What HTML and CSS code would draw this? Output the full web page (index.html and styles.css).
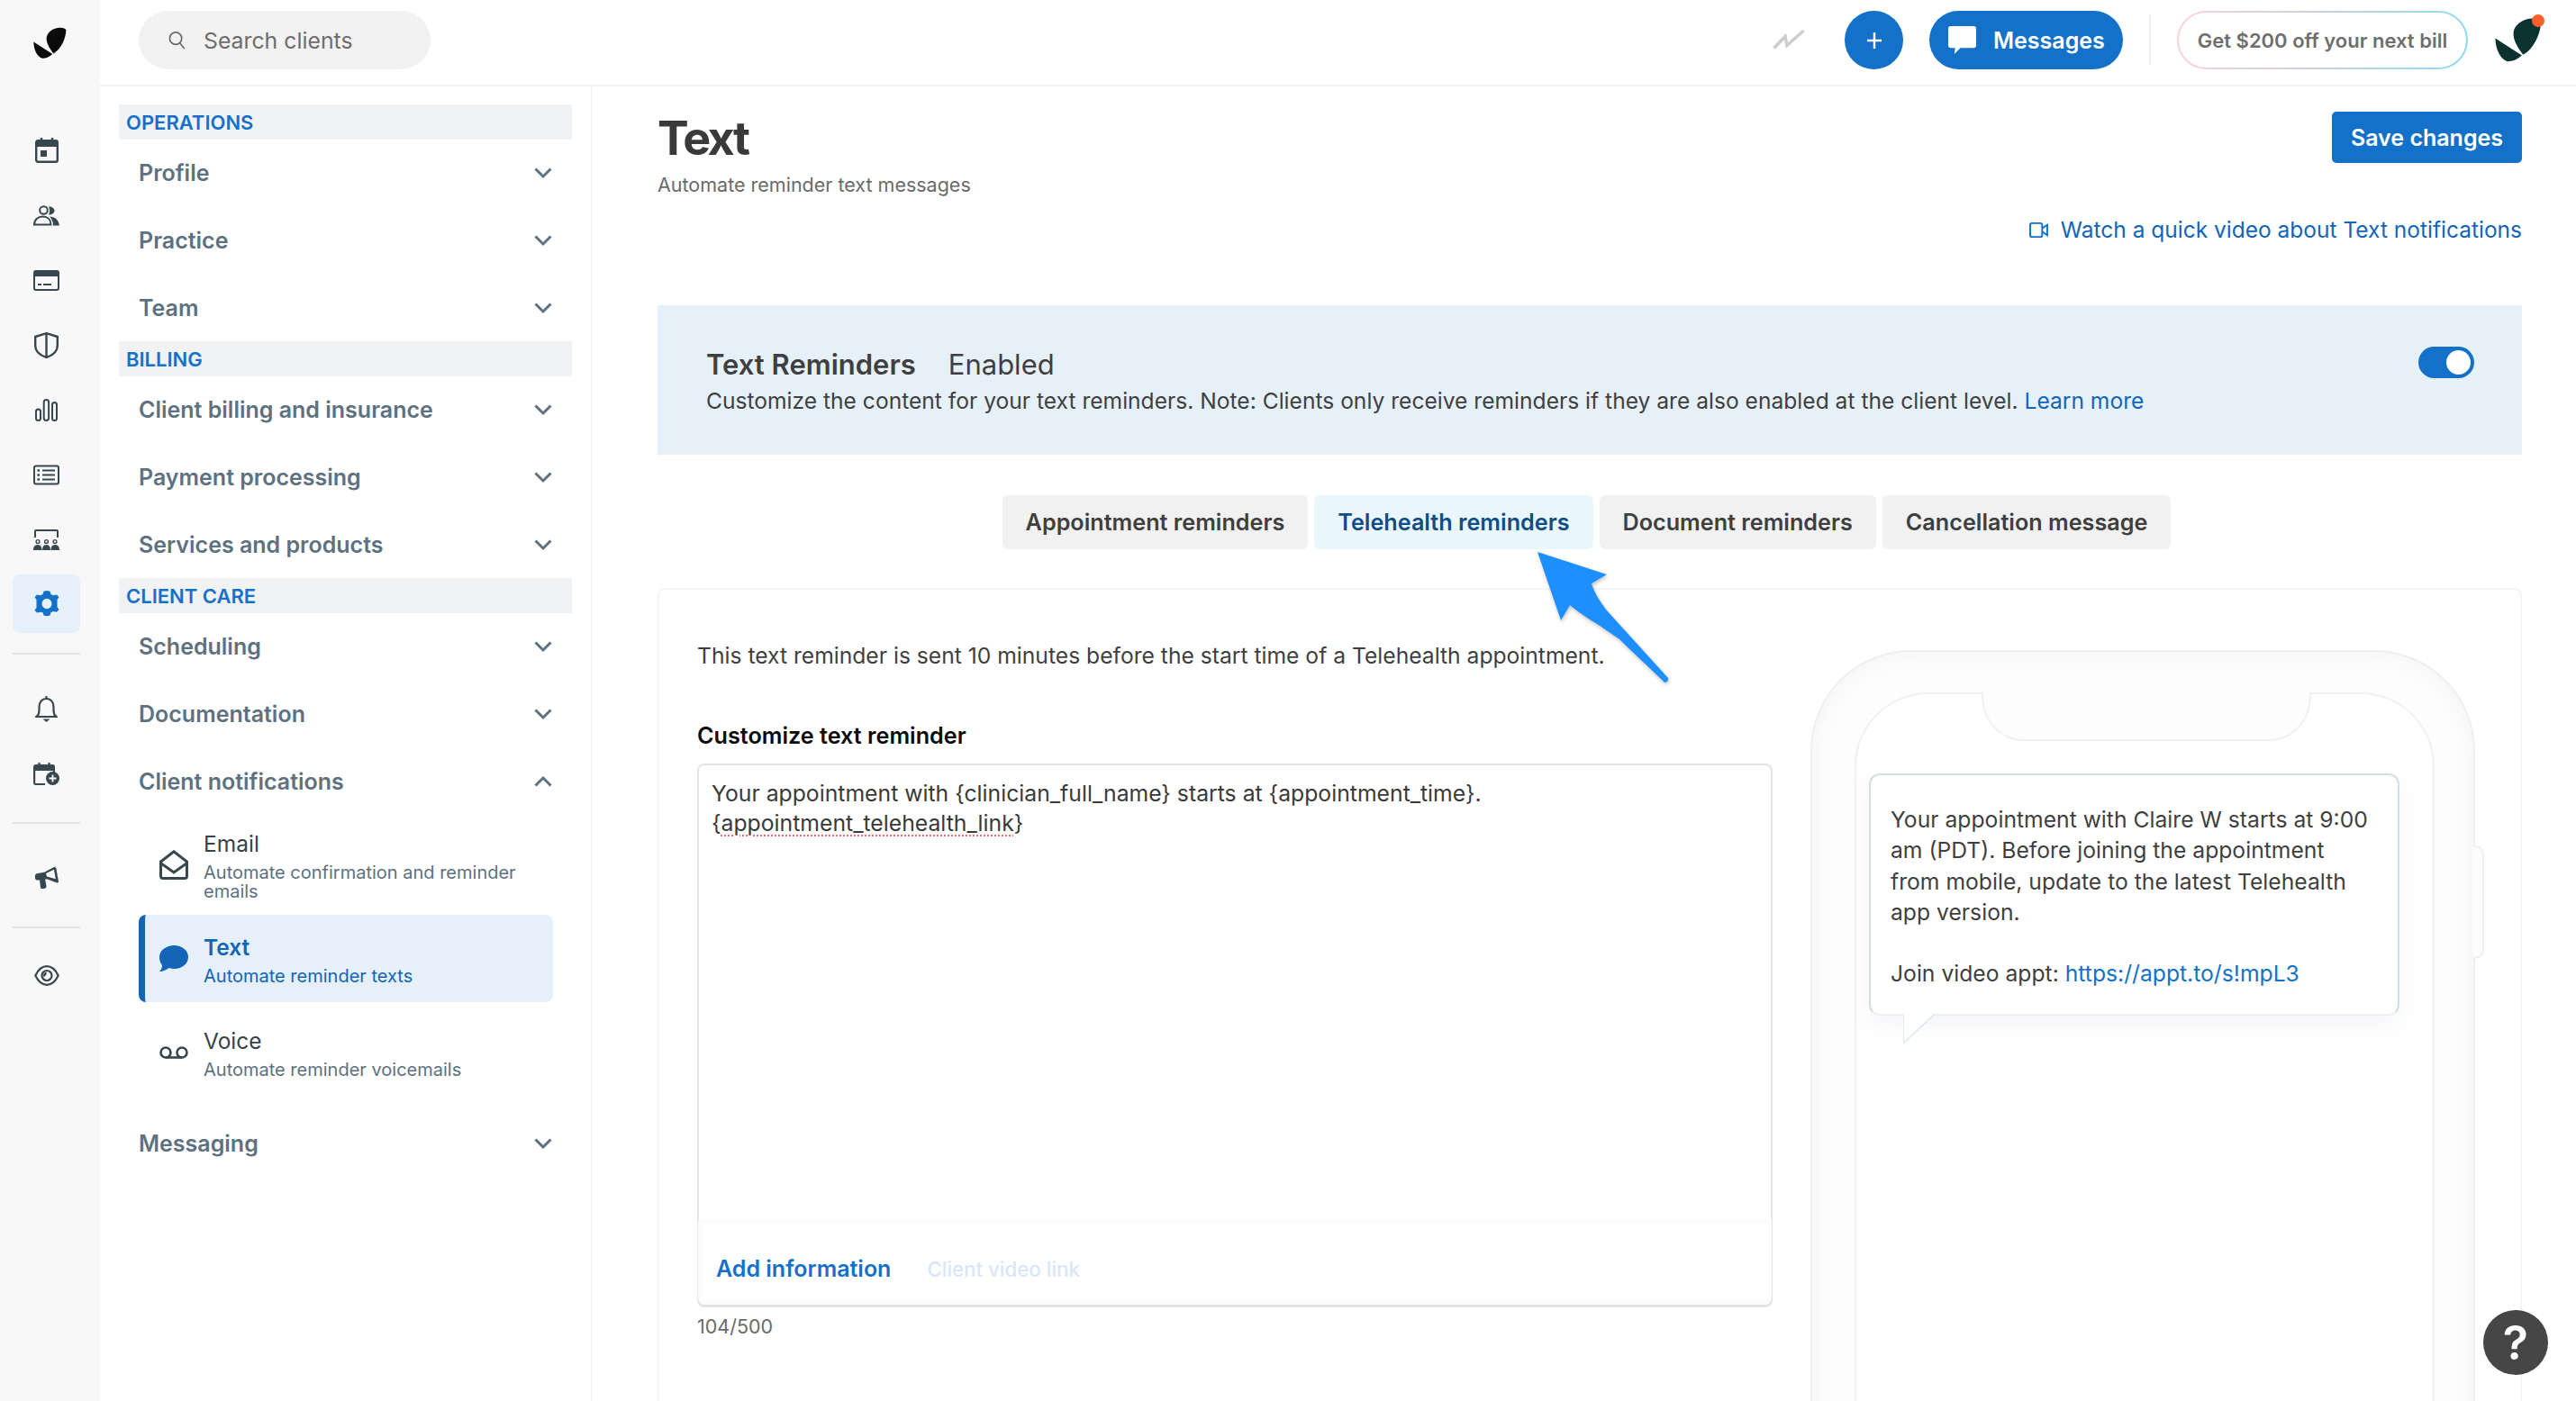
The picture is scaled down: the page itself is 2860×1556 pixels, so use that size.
FILE: index.html
```html
<!DOCTYPE html>
<html lang="en">
<head>
<meta charset="utf-8">
<title>Text notifications</title>
<link rel="stylesheet" href="styles.css">
</head>
<body>
<svg class="defs" width="0" height="0" aria-hidden="true">
  <symbol id="chev" viewBox="0 0 20 14"><path d="M1.500 2.500 10 11l8.500-8.500" fill="none" stroke="currentColor" stroke-width="3"/></symbol>
  <symbol id="logo" viewBox="0 0 37 35"><path d="M36.300 3C36.500 7 35 13 32.500 18 30 23 26.500 27 22.300 29.500 19 25 15.500 20 14.800 15 14.300 11 15 8 19 4.500 24 .5 33-.5 36.300 3Z"/><path d="M.3 16.500 21.300 30C18 33 14 35 9.700 34.700 4 33 .5 25 .3 16.500Z"/></symbol>
</svg>
<div class="app">
  <nav class="rail">
    <div class="rail-logo"><svg class="logo-mark"><use href="#logo"/></svg></div>
    <div class="rail-group">
      <a class="rail-item"><svg viewBox="0 0 26 28" class="ri ri-cal"><path d="M7 0v4M19 0v4" stroke-width="2.400"/><rect x="1.200" y="3.200" width="23.600" height="23.600" rx="2" stroke-width="2.400"/><path d="M1 3h24v7H1z" fill="currentColor" stroke="none"/><rect x="6" y="14" width="7" height="7" fill="currentColor" stroke="none"/></svg></a>
      <a class="rail-item"><svg viewBox="0 0 29 22" class="ri ri-wide"><circle cx="11.500" cy="5" r="4.300" stroke-width="2"/><path d="M17 1c4 0 6.500 2 6.500 4.500S21 10 17 10c1.500-3 1.500-6 0-9Z" fill="currentColor" stroke="none"/><path d="M1 21c0-5.500 4-9 9.500-9s9 3.500 9 9Z" stroke-width="2"/><path d="M18 12c6 0 10 3.500 11 10h-7c0-4-1.500-7.500-4-10Z" fill="currentColor" stroke="none"/></svg></a>
      <a class="rail-item"><svg viewBox="0 0 29 23" class="ri ri-wide"><rect x="1" y="1" width="27" height="21" rx="2" stroke-width="2"/><path d="M1 1h27v6H1z" fill="currentColor" stroke="none"/><path d="M5 16h4M11 16h9" stroke-width="2"/></svg></a>
      <a class="rail-item"><svg viewBox="0 0 27 29" class="ri ri-shield"><path d="M13.500 1.200 25.800 5v10c0 6.500-5 10.500-12.300 13C6.200 25.500 1.200 21.500 1.200 15V5Z" stroke-width="2.400"/><path d="M13.500 2v26" stroke-width="2.400"/></svg></a>
      <a class="rail-item"><svg viewBox="0 0 25 25" class="ri ri-bars"><rect x="1" y="11.500" width="5" height="12.500" rx="2.500" stroke-width="2"/><rect x="9.700" y="1" width="5.400" height="23" rx="2.700" stroke-width="2"/><rect x="19" y="4" width="5" height="20" rx="2.500" stroke-width="2"/></svg></a>
      <a class="rail-item"><svg viewBox="0 0 29 22" class="ri ri-wide"><rect x="1" y="1" width="27" height="20" rx="2" stroke-width="2"/><path d="M10 6h14M10 11h14M10 16h14" stroke-width="2"/><path d="M4.500 6h2.500M4.500 11h2.500M4.500 16h2.500" stroke-width="2.400"/></svg></a>
      <a class="rail-item"><svg viewBox="0 0 29 23" class="ri ri-wide"><path d="M2 9V2a1 1 0 0 1 1-1h23a1 1 0 0 1 1 1v7" stroke-width="2"/><circle cx="5" cy="13.500" r="1.900" stroke-width="1.400"/><circle cx="14.500" cy="13.500" r="1.900" stroke-width="1.400"/><circle cx="24" cy="13.500" r="1.900" stroke-width="1.400"/><path d="M0 23c0-4 2-6 5-6s4.500 2 4.500 6ZM10 23c0-4 1.500-6 4.500-6s4.500 2 4.500 6ZM19.500 23c0-4 1.500-6 4.500-6s5 2 5 6Z" fill="currentColor" stroke="none"/></svg></a>
      <a class="rail-item is-active"><svg viewBox="0 0 28 36" class="ri ri-gear" preserveAspectRatio="none"><path fill-rule="evenodd" d="M14 0l3.500 1 1 4 2.500 1.500 4-1 2.500 3.500-2 3.500v10l2 3.500-2.500 3.500-4-1-2.500 1.500-1 4-3.500 1-3.500-1-1-4L7 29.500l-4 1L.5 27l2-3.500v-11l-2-3.500L3 5.500l4 1L9.500 5l1-4z M14 11a5.500 7 0 1 0 0 14 5.500 7 0 0 0 0-14Z"/></svg></a>
    </div>
    <hr class="rail-rule rule-a">
    <div class="rail-group rail-group-b">
      <a class="rail-item"><svg viewBox="0 0 25 29" class="ri ri-bell"><path d="M12.500 0v3" stroke-width="2"/><path d="M1.500 23c2-1.500 3-3.500 3-7v-4c0-5 3-9 8-9s8 4 8 9v4c0 3.500 1 5.500 3 7Z" stroke-width="2.200"/><path d="M8.500 25.500h8L12.500 29Z" fill="currentColor" stroke="none"/></svg></a>
      <a class="rail-item"><svg viewBox="0 0 29 25" class="ri ri-calp"><path d="M6.500 0v4M17.500 0v4" stroke-width="2.200"/><path d="M13 24H2.800a1.700 1.700 0 0 1-1.700-1.700V4.700A1.700 1.700 0 0 1 2.800 3h18.400a1.700 1.700 0 0 1 1.700 1.700V12" stroke-width="2.200"/><path d="M1 3h22v6H1z" fill="currentColor" stroke="none"/><circle cx="21.500" cy="17.500" r="7.500" fill="currentColor" stroke="none"/><path d="M21.500 13.500v8M17.500 17.500h8" stroke="#fff" stroke-width="1.800"/></svg></a>
    </div>
    <hr class="rail-rule rule-b">
    <a class="rail-item rail-mega"><svg viewBox="0 0 30 32" class="ri ri-mega" preserveAspectRatio="none"><path d="M1 13c0-2 1-3 3-3.500L12 8 24 1l2 1 3 19-2 1-12-5-2 .5 1.500 9c.2 2-1 3-3 3h-2c-1 0-1.500-.5-2-1.500L6.500 18.500 4 18.500C2 18.500 1 17 1 15Z" fill="currentColor" stroke="none"/><path d="M14 9.500 23.500 4.500 25.500 17 15 13.500Z" fill="#f8f8f8" stroke="none"/></svg></a>
    <hr class="rail-rule rule-c">
    <a class="rail-item rail-eye"><svg viewBox="0 0 28 23" class="ri ri-eye"><path d="M1.300 11.500C4.500 5 9 1.200 14 1.200s9.500 3.800 12.700 10.300C23.500 18 19 21.800 14 21.800S4.500 18 1.300 11.500Z" stroke-width="2.200"/><circle cx="14" cy="11.500" r="5.500" stroke-width="2.200"/><path d="M14 7.500a4 4 0 0 0-3.700 5.500C12.500 12.500 14 10 14 7.500Z" fill="currentColor" stroke="none"/></svg></a>
  </nav>

  <div class="shell">
    <header class="topbar">
      <div class="search">
        <svg class="search-icon" viewBox="0 0 20 22"><circle cx="8.500" cy="8.500" r="7" /><path d="M13.500 14l5 6.500"/></svg>
        <span>Search clients</span>
      </div>
      <div class="top-actions">
        <svg class="spark" viewBox="0 0 36 24"><path d="M1.500 21.500 14 8.500l2 10L34.500 2" /></svg>
        <button class="btn-plus" type="button"><svg viewBox="0 0 18 20"><path d="M9 1v18M1 10h16"/></svg></button>
        <button class="btn-messages" type="button"><svg viewBox="0 0 32 32"><path d="M3 0h26a3 3 0 0 1 3 3v19a3 3 0 0 1-3 3H14l-7 7 1-7H3a3 3 0 0 1-3-3V3a3 3 0 0 1 3-3Z"/></svg>Messages</button>
        <span class="top-sep"></span>
        <a class="promo">Get $200 off your next bill</a>
        <span class="avatar"><svg class="avatar-mark"><use href="#logo"/></svg><i class="avatar-dot"></i></span>
      </div>
    </header>

    <div class="body">
      <aside class="sidebar">
        <div class="sec">OPERATIONS</div>
        <a class="item">Profile<svg class="chev"><use href="#chev"/></svg></a>
        <a class="item">Practice<svg class="chev"><use href="#chev"/></svg></a>
        <a class="item">Team<svg class="chev"><use href="#chev"/></svg></a>
        <div class="sec">BILLING</div>
        <a class="item">Client billing and insurance<svg class="chev"><use href="#chev"/></svg></a>
        <a class="item">Payment processing<svg class="chev"><use href="#chev"/></svg></a>
        <a class="item">Services and products<svg class="chev"><use href="#chev"/></svg></a>
        <div class="sec">CLIENT CARE</div>
        <a class="item">Scheduling<svg class="chev"><use href="#chev"/></svg></a>
        <a class="item">Documentation<svg class="chev"><use href="#chev"/></svg></a>
        <a class="item">Client notifications<svg class="chev chev-up"><use href="#chev"/></svg></a>
        <a class="sub sub-email">
          <svg class="sub-icon" viewBox="0 0 32 33"><path d="M1.500 13 16 1.800 30.500 13v16a2.500 2.500 0 0 1-2.500 2.500H4A2.500 2.500 0 0 1 1.500 29Z"/><path d="M2 15l14 10 14-10"/></svg>
          <span class="sub-text"><b>Email</b><small>Automate confirmation and reminder emails</small></span>
        </a>
        <a class="sub sub-active">
          <svg class="sub-icon sub-icon-fill" viewBox="0 0 32 29"><path d="M16.500 0C25 0 32 5.500 32 13s-7 13-15.500 13c-2 0-4-.3-6-1C8 27 4 29 0 29c2-2 3-4.500 3-7C1 19.500 0 16.500 0 13 0 5.500 7.500 0 16.500 0Z"/></svg>
          <span class="sub-text"><b>Text</b><small>Automate reminder texts</small></span>
        </a>
        <a class="sub sub-voice">
          <svg class="sub-icon sub-icon-voice" viewBox="0 0 32 14"><circle cx="7" cy="7" r="5.500"/><circle cx="25" cy="7" r="5.500"/><path d="M7 12.500h18"/></svg>
          <span class="sub-text"><b>Voice</b><small>Automate reminder voicemails</small></span>
        </a>
        <a class="item item-msg">Messaging<svg class="chev"><use href="#chev"/></svg></a>
      </aside>

      <main class="main">
        <div class="page-head">
          <div>
            <h1>Text</h1>
            <p class="subtitle">Automate reminder text messages</p>
          </div>
          <button class="btn-save" type="button">Save changes</button>
        </div>
        <a class="video-link"><svg viewBox="0 0 22 20"><rect x="1" y="2" width="14" height="16" rx="2"/><path d="M15 8l6-4v12l-6-4"/></svg>Watch a quick video about Text notifications</a>

        <section class="banner">
          <div class="banner-text">
            <div class="banner-head"><strong>Text Reminders</strong><span>Enabled</span></div>
            <p>Customize the content for your text reminders. Note: Clients only receive reminders if they are also enabled at the client level. <a>Learn more</a></p>
          </div>
          <span class="toggle"><i></i></span>
        </section>

        <div class="tabs">
          <a class="tab">Appointment reminders</a>
          <a class="tab tab-on">Telehealth reminders</a>
          <a class="tab">Document reminders</a>
          <a class="tab">Cancellation message</a>
        </div>

        <section class="card">
          <div class="form">
            <p class="intro">This text reminder is sent 10 minutes before the start time of a Telehealth appointment.</p>
            <label class="label">Customize text reminder</label>
            <div class="editor">
              <div class="editor-text">Your appointment with {clinician_full_name} starts at {appointment_time}.<br>{<span class="spell">appointment_telehealth_link</span>}</div>
              <div class="editor-foot"><a class="add-info">Add information</a><span class="token">Client video link</span></div>
            </div>
            <div class="count">104/500</div>
          </div>
          <div class="phone">
            <i class="phone-btn"></i>
            <div class="screen">
              <i class="notch"></i>
              <div class="bubble">
                Your appointment with Claire W starts at 9:00<br>am (PDT). Before joining the appointment<br>from mobile, update to the latest Telehealth<br>app version.<br><br>Join video appt: <a>https://appt.to/s!mpL3</a>
                <svg class="bubble-tail" viewBox="0 0 36 33"><path d="M0 0v31l1 1L35 0"/></svg>
              </div>
            </div>
          </div>
        </section>
      </main>
    </div>
  </div>
</div>
<svg class="arrow" viewBox="0 0 160 160"><path d="M4 3 81 28 64 38C66 46 72 56 80 67L149 143Q150 147 145 148C125 128 110 115 95 100 75 85 55 75 40 62L30 79Z"/></svg>
<a class="help">?</a>
</body>
</html>
```
FILE: styles.css
```css
* { box-sizing: border-box; }
html, body { margin: 0; height: 100%; }
body { width: 2860px; height: 1556px; overflow: hidden; position: relative; background: #fff; font-family: Inter, "Liberation Sans", sans-serif; color: #3f3f3f; }
a { color: inherit; text-decoration: none; }
button { font-family: inherit; border: 0; cursor: pointer; }
.defs { position: absolute; }
.app { display: flex; height: 1556px; }

.rail { width: 111px; flex: none; background: #f8f8f8; color: #37474f; display: flex; flex-direction: column; align-items: flex-start; padding-left: 14px; }
.rail-logo { height: 95px; width: 75px; padding: 30px 0 0 23px; }
.logo-mark { width: 37px; height: 35px; fill: #0b0b0b; display: block; }
.rail-group { display: flex; flex-direction: column; margin-top: 36px; }
.rail-group-b { margin-top: 24px; }
.rail-item { width: 75px; height: 72px; display: flex; align-items: center; justify-content: center; border-radius: 8px; }
.ri { display: block; fill: none; stroke: currentColor; }
.ri-cal { width: 26px; height: 28px; }
.ri-wide { width: 29px; height: 23px; }
.ri-shield { width: 27px; height: 29px; }
.ri-bars { width: 25px; height: 25px; }
.ri-gear { width: 28px; height: 29px; fill: currentColor; stroke: none; }
.ri-bell { width: 25px; height: 29px; }
.ri-calp { width: 29px; height: 25px; }
.ri-mega { width: 28px; height: 27px; }
.ri-eye { width: 28px; height: 23px; }
.is-active { background: #e6f0fa; color: #1471c9; height: 65px; margin-top: 3px; }
.rail-rule { width: 75px; height: 2px; margin: 0; border: 0; background: #e2e2e2; }
.rule-a { margin-top: 22px; }
.rule-b { margin-top: 18px; }
.rule-c { margin-top: 18px; }
.rail-mega { margin-top: 24px; }
.rail-eye { margin-top: 16px; }

.shell { flex: 1; min-width: 0; display: flex; flex-direction: column; }
.topbar { height: 96px; flex: none; display: flex; justify-content: space-between; align-items: flex-start; border-bottom: 2px solid #f3f3f3; padding: 12px 38px 0 43px; }
.search { width: 324px; height: 65px; border-radius: 33px; background: #f2f2f2; display: flex; align-items: center; padding-left: 33px; font-size: 24.800px; color: #6d6d6d; }
.search-icon { width: 19px; height: 22px; fill: none; stroke: #6d6d6d; stroke-width: 1.800; margin-right: 20px; }
.top-actions { display: flex; align-items: flex-start; }
.spark { width: 36px; height: 24px; margin: 20px 44px 0 0; fill: none; stroke: #cdcdcd; stroke-width: 3.500; }
.btn-plus { width: 65px; height: 65px; border-radius: 50%; background: #1471c9; padding: 0; display: flex; align-items: center; justify-content: center; margin-right: 29px; }
.btn-plus svg { width: 18px; height: 20px; stroke: #fff; stroke-width: 2.400; fill: none; }
.btn-messages { width: 215px; height: 65px; border-radius: 33px; background: #1471c9; color: #fff; font-size: 25px; font-weight: 600; display: flex; align-items: center; padding: 0 0 0 21px; margin-right: 29px; }
.btn-messages svg { width: 31px; height: 31px; fill: #fff; margin-right: 19px; }
.top-sep { width: 2px; height: 56px; background: #efefef; margin: 4px 29px 0 0; }
.promo { width: 323px; height: 65px; border-radius: 33px; display: flex; align-items: center; justify-content: center; font-size: 22px; font-weight: 600; color: #6e6e6e; border: 2px solid transparent; background: linear-gradient(#fff, #fff) padding-box, linear-gradient(90deg, #fbd3d3, #c9cfe3 50%, #8cdcf2) border-box; }
.avatar { position: relative; width: 52px; height: 52px; margin: 4px 0 0 30px; display: block; }
.avatar-mark { width: 52px; height: 52px; margin-top: 2px; fill: #0a3330; display: block; }
.avatar-dot { position: absolute; left: 41px; top: 0; width: 14px; height: 14px; border-radius: 50%; background: #ff5f2d; }

.body { flex: 1; min-height: 0; display: flex; }
.sidebar { width: 547px; flex: none; padding: 20px 21px 0 21px; border-right: 2px solid #f5f5f5; }
.sec { height: 39px; background: #f1f2f4; color: #1471c9; font-size: 22px; font-weight: 600; padding-left: 8px; line-height: 40px; }
.item { height: 74.670px; display: flex; align-items: center; justify-content: space-between; padding: 0 0 0 22px; font-size: 25px; font-weight: 600; color: #5d7180; }
.chev { width: 20px; height: 14px; color: #5d7180; margin-right: 22px; }
.chev-up { transform: rotate(180deg); }
.sub { display: flex; align-items: center; margin-left: 22px; width: 460px; padding-left: 23px; border-radius: 8px; }
.sub-email { height: 111px; }
.sub-active { height: 97px; background: #e6f0fa; border-left: 7px solid #1265b7; padding-left: 16px; color: #1265b7; }
.sub-voice { height: 112px; }
.sub-icon { width: 32px; height: 33px; flex: none; fill: none; stroke: #37474f; stroke-width: 3; margin-right: 17px; }
.sub-icon-fill { fill: #1265b7; stroke: none; height: 29px; }
.sub-icon-voice { height: 14px; stroke-width: 2.600; }
.sub-text { display: flex; flex-direction: column; min-width: 0; }
.sub-email .sub-text { margin-top: 2px; }
.sub-active .sub-text { margin-top: 3px; }
.sub-voice .sub-text { margin-top: 3px; }
.sub-text b { font-size: 24.500px; font-weight: 400; line-height: 30px; color: #37424a; }
.sub-text small { font-size: 20px; line-height: 21px; color: #5d7180; margin-top: 7px; }
.sub-active b { font-weight: 600; color: #1265b7; }
.sub-active small { color: #1265b7; }
.item-msg { margin-top: 8px; }

.main { flex: 1; min-width: 0; padding: 28px 60px 0 72px; }
.page-head { height: 101px; display: flex; justify-content: space-between; align-items: flex-start; }
h1 { margin: 0; font-size: 52px; font-weight: 700; letter-spacing: -2.500px; line-height: 59px; color: #3a3a3a; }
.subtitle { margin: 9px 0 0; font-size: 21.500px; line-height: 26px; color: #6a6a6a; }
.btn-save { width: 211px; height: 57px; background: #1471c9; color: #fff; font-size: 25px; font-weight: 600; border-radius: 5px; }
.video-link { display: flex; justify-content: flex-end; align-items: center; height: 30px; margin-top: 15px; font-size: 24.500px; color: #1265b7; }
.video-link svg { width: 21px; height: 19px; fill: none; stroke: #1471c9; stroke-width: 2; margin-right: 14px; }
.banner { height: 166px; margin-top: 69px; background: #e6f0f9; display: flex; justify-content: space-between; align-items: flex-start; padding: 46px 53px 0 54px; }
.banner-text { margin-top: 2px; }
.banner-head { display: flex; gap: 36px; font-size: 31px; line-height: 36px; }
.banner-head strong { font-weight: 600; }
.banner p { margin: 4px 0 0; font-size: 24.600px; line-height: 36px; color: #3f3f3f; }
.banner p a { color: #1265b7; }
.toggle { width: 62px; height: 35px; border-radius: 18px; background: #1471c9; position: relative; display: block; }
.toggle i { position: absolute; right: 4px; top: 4px; width: 27px; height: 27px; border-radius: 50%; background: #fff; }
.tabs { display: flex; justify-content: center; gap: 7px; margin: 45px 7px 0 0; }
.tab { height: 60px; padding: 0 26px; display: flex; align-items: center; background: #f1f1f1; border-radius: 6px; font-size: 25.200px; font-weight: 600; color: #3f3f3f; }
.tab-on { background: #ebf7fe; color: #0e4c8a; }
.card { margin-top: 43px; height: 1000px; border: 2px solid #f5f5f5; border-radius: 8px; display: grid; grid-template-columns: 1194px 738px; column-gap: 42px; padding: 55px 0 0 42px; }
.intro { margin: 0; font-size: 24.650px; line-height: 36px; color: #3f3f3f; }
.label { display: block; margin-top: 53px; font-size: 25.200px; line-height: 36px; font-weight: 600; color: #0a0a0a; }
.editor { margin-top: 13px; height: 604px; border: 2px solid #e4e4e4; border-bottom-width: 3px; border-radius: 8px; display: flex; flex-direction: column; justify-content: space-between; }
.editor-text { padding: 15px 14px 0; font-size: 24.750px; line-height: 32.800px; color: #3a3a3a; }
.spell { text-decoration: underline dotted #f26a6a 2px; text-underline-offset: 5px; }
.editor-foot { height: 94px; display: flex; align-items: center; padding: 14px 0 0 20px; margin: 0 -1px; background: #fff; border-radius: 0 0 8px 8px; box-shadow: inset 0 0 10px rgba(0, 0, 0, .035); }
.add-info { font-size: 25px; font-weight: 600; color: #1471c9; }
.token { font-size: 22.300px; font-weight: 500; color: #d9e6f8; margin-left: 40px; }
.count { margin-top: 5px; font-size: 21.500px; line-height: 32px; color: #6a6a6a; }
.phone { position: relative; margin-top: 12px; height: 1000px; padding: 45px 43px 0 47px; border: 2px solid #efefef; border-radius: 112px; background: #fdfdfd; box-shadow: inset 0 0 30px rgba(0, 0, 0, .045); }
.phone-btn { position: absolute; right: -12px; top: 215px; width: 12px; height: 126px; border: 2px solid #f0f0f0; border-left: 0; border-radius: 0 10px 10px 0; background: #fcfcfc; }
.screen { position: relative; height: 900px; border: 2px solid #f2f0f0; border-radius: 82px; background: #fff; padding: 88px 0 0 14px; }
.notch { position: absolute; left: 139px; top: -2px; width: 366px; height: 54px; background: #fdfdfd; border: 2px solid #f2f0f0; border-top: 0; border-radius: 0 0 46px 46px / 0 0 50px 50px; }
.bubble { position: relative; width: 589px; height: 269px; border: 2px solid #d3dde5; border-bottom-color: #eef1f4; border-radius: 12px; padding: 32px 0 0 22px; font-size: 24.700px; line-height: 34.300px; color: #3f3f3f; background: #fff; box-shadow: 0 10px 24px rgba(60, 90, 130, .06); }
.bubble a { color: #1471c9; }
.bubble-tail { position: absolute; left: 36px; top: 265px; width: 36px; height: 33px; fill: #fff; stroke: #dde5ec; stroke-width: 1.500; }

.arrow { position: absolute; left: 1703px; top: 610px; width: 160px; height: 160px; fill: #1e8fff; filter: drop-shadow(1px 2px 2px rgba(0, 0, 0, .25)); }
.help { position: absolute; left: 2757px; top: 1455px; width: 72px; height: 72px; border-radius: 50%; background: #464646; color: #fff; font-size: 52px; font-weight: 600; display: flex; align-items: center; justify-content: center; }
```
